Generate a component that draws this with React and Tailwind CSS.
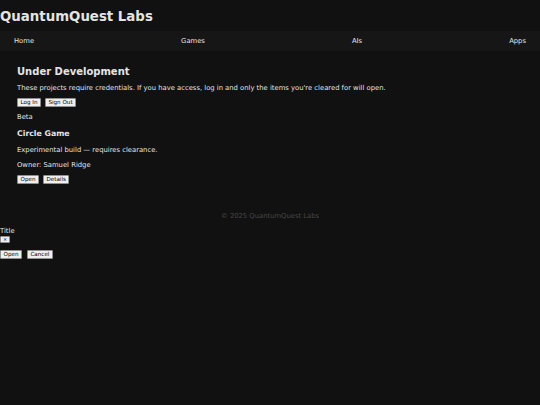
import React from "react";

const navLinks = ["Home", "Games", "AIs", "Apps"];

const Btn = ({ children }) => (
  <button className="bg-[#efefef] text-black border border-[#8f8f8f] rounded-[1px] px-[2.5px] h-[9px] text-[5.6px] leading-[7px]">
    {children}
  </button>
);

export default function App() {
  return (
    <div className="min-h-[405px] bg-[#111111] text-[#e4e4e4] font-['DejaVu_Sans',sans-serif] text-[6.8px] leading-[8px]">
      <header className="pt-[9px] pb-[6px]">
        <h1 className="text-[13.33px] font-bold leading-[16px]">QuantumQuest Labs</h1>
      </header>

      <nav className="bg-[#161616] h-[20px] px-[14px] flex items-center justify-between">
        {navLinks.map((link) => (
          <a key={link} className="text-[#e4e4e4]">
            {link}
          </a>
        ))}
      </nav>

      <main className="px-[17px] pt-[15px] pb-[21px]">
        <h2 className="text-[10px] font-bold leading-[12px]">Under Development</h2>
        <p className="mt-[6px]">
          These projects require credentials. If you have access, log in and only the items you're cleared for will open.
        </p>
        <div className="mt-[6px] flex gap-[4px]">
          <Btn>Log In</Btn>
          <Btn>Sign Out</Btn>
        </div>
        <p className="mt-[6px]">Beta</p>

        <h3 className="mt-[8px] text-[7.8px] font-bold leading-[9px]">Circle Game</h3>
        <p className="mt-[8px]">Experimental build — requires clearance.</p>
        <p className="mt-[7px]">Owner: Samuel Ridge</p>
        <div className="mt-[6px] flex gap-[4px]">
          <Btn>Open</Btn>
          <Btn>Details</Btn>
        </div>
      </main>

      <footer className="text-center text-[#474747] pt-[7px] pb-[7px]">© 2025 QuantumQuest Labs</footer>

      <div>
        <div>Title</div>
        <button className="bg-[#efefef] text-black border border-[#8f8f8f] rounded-[1px] w-[10px] h-[7px] text-[5px] leading-[5px]">
          ×
        </button>
        <div className="mt-[7px] flex gap-[5px]">
          <Btn>Open</Btn>
          <Btn>Cancel</Btn>
        </div>
      </div>
    </div>
  );
}
